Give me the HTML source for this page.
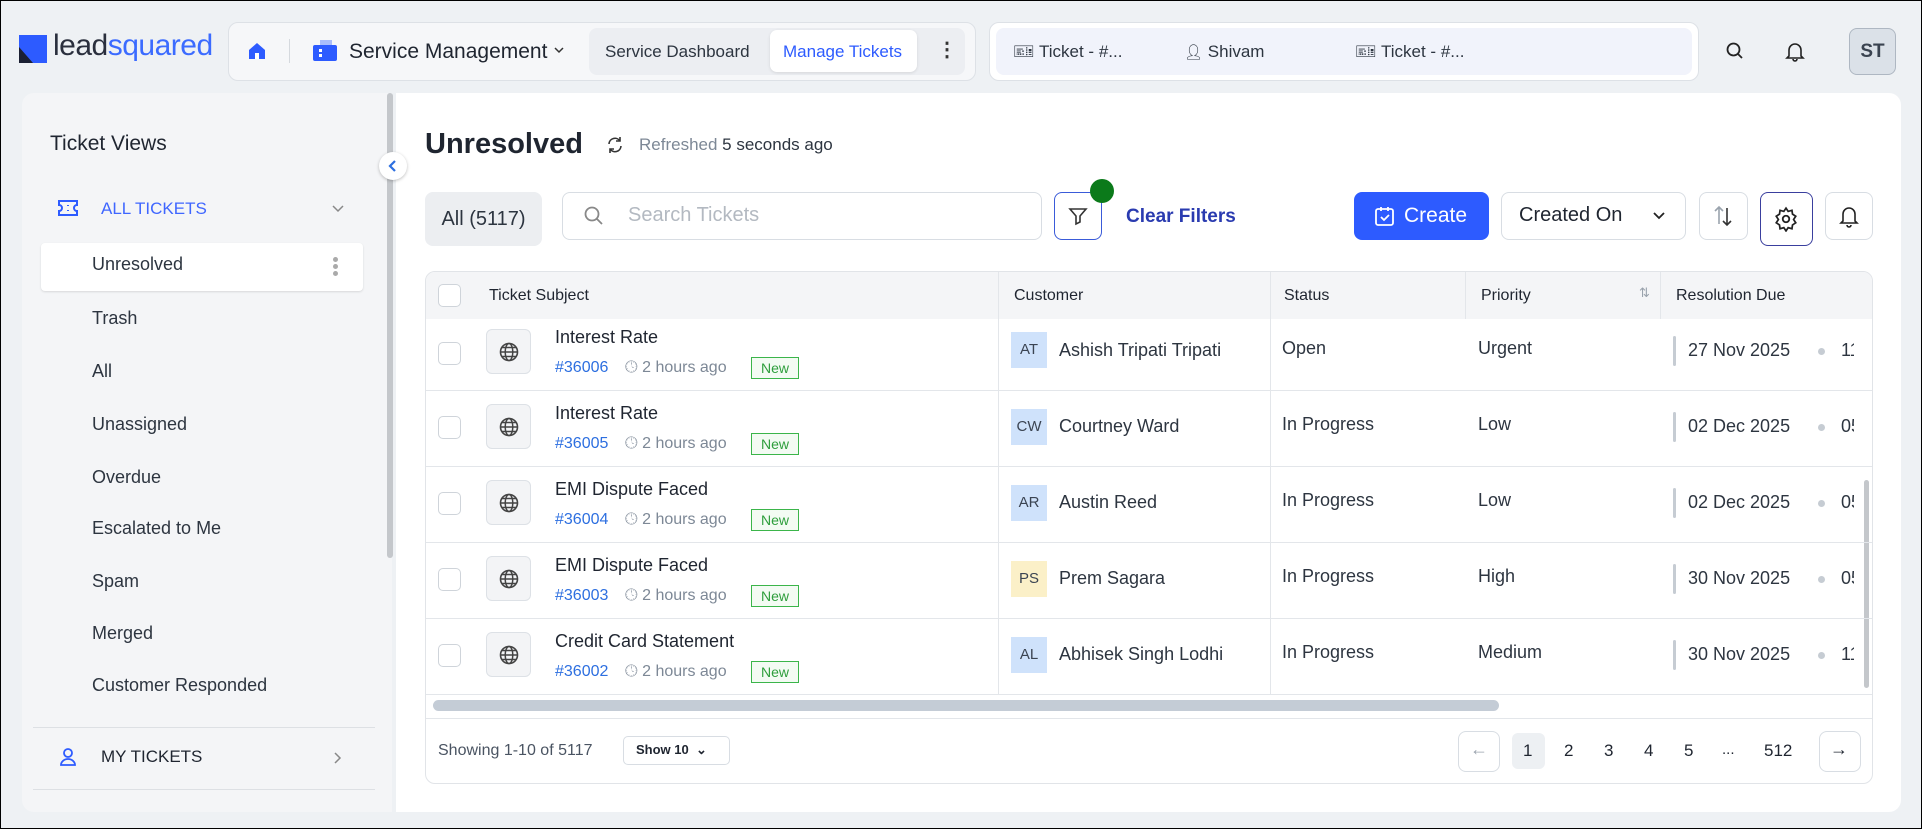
<!DOCTYPE html>
<html><head><meta charset="utf-8"><style>
*{box-sizing:border-box;margin:0;padding:0}
body{width:1922px;height:829px;overflow:hidden;background:#eef1f4;font-family:"Liberation Sans",sans-serif;color:#1f2937;position:relative;border:1px solid #000}
.a{position:absolute}
.t{position:absolute;white-space:nowrap}
.row{position:absolute;left:0;width:1448px;height:76px;border-bottom:1px solid #e3e6ea}
.cb{position:absolute;width:23px;height:23px;border:1.5px solid #cfd4da;border-radius:5px;background:#fff}
.btn{position:absolute;border:1px solid #d8dde3;border-radius:8px;background:#fff}
.si{font-size:18px;color:#2d3540;left:91px}
.g{position:absolute;width:45px;height:45px;background:#f3f4f6;border:1px solid #dde1e6;border-radius:6px}
.gl{position:absolute}
.nw{position:absolute;width:48px;height:22px;border:1px solid #3bb54a;color:#2e9e3c;font-size:14px;text-align:center;line-height:20px;background:#f3fbf3}
.av{position:absolute;width:36px;height:36px;font-size:15px;color:#3b4452;text-align:center;line-height:36px}
.bar{position:absolute;width:3px;height:30px;background:#c6ccd3;border-radius:2px}
.dt{position:absolute;width:7px;height:7px;border-radius:50%;background:#c6ccd3}
.sub{font-size:18px;color:#1f2530}
.id{font-size:16px;color:#2d6fe0}
.tm{font-size:16px;color:#7d8896}
.cell{font-size:18px;color:#2d3540}
</style></head><body>
<svg width="0" height="0" style="position:absolute"><defs><symbol id="globe" viewBox="0 0 22 22"><circle cx="11" cy="11" r="8.5" stroke="#444" stroke-width="1.6" fill="none"/><ellipse cx="11" cy="11" rx="3.8" ry="8.5" stroke="#444" stroke-width="1.5" fill="none"/><path d="M2.5 11h17M4 6.5h14M4 15.5h14" stroke="#444" stroke-width="1.4"/></symbol></defs></svg>
<!-- logo -->
<div class="a" style="left:18px;top:34px;width:28px;height:28px;background:#2d5bff"></div>
<div class="a" style="left:18px;top:46px;width:14px;height:16px;background:#1b2033;clip-path:polygon(0 0,100% 100%,0 100%)"></div>
<div class="t" style="left:52px;top:28px;font-size:30px;letter-spacing:-0.5px;color:#2a2f3d">lead<span style="color:#3b6bff">squared</span></div>
<!-- nav box -->
<div class="a" style="left:227px;top:21px;width:748px;height:59px;background:#f6f7f9;border:1px solid #dde1e6;border-radius:10px"></div>
<svg class="a" style="left:246px;top:40px" width="20" height="20" viewBox="0 0 20 20"><path d="M2 9L10 2l8 7v9H2z" fill="#2d5bff"/><rect x="8" y="12" width="4" height="6" fill="#fff"/></svg>
<div class="a" style="left:288px;top:38px;width:1px;height:24px;background:#d5d9de"></div>
<svg class="a" style="left:310px;top:36px" width="28" height="28" viewBox="0 0 28 28"><path d="M9 3l12 0 0 5-12 0z" fill="#a9bdfc"/><rect x="2" y="8" width="24" height="16" rx="2" fill="#2d5bff"/><rect x="8" y="12" width="3" height="3" fill="#fff"/><rect x="8" y="17" width="3" height="3" fill="#fff"/></svg>
<div class="t" style="left:348px;top:39px;font-size:21px;color:#1f2530">Service Management</div>
<svg class="a" style="left:552px;top:44px" width="12" height="10"><path d="M2 3l4 4 4-4" stroke="#333" stroke-width="1.5" fill="none"/></svg>
<div class="a" style="left:588px;top:27px;width:376px;height:47px;background:#eceef2;border-radius:8px"></div>
<div class="t" style="left:604px;top:41px;font-size:17px;color:#2d3540">Service Dashboard</div>
<div class="a" style="left:769px;top:29px;width:147px;height:42px;background:#fff;border-radius:7px;box-shadow:0 1px 3px rgba(0,0,0,.1)"></div>
<div class="t" style="left:782px;top:41px;font-size:17px;color:#2d5bff">Manage Tickets</div>
<div class="t" style="left:936px;top:36px;font-size:20px;color:#333;font-weight:bold">⋮</div>
<!-- tabs box -->
<div class="a" style="left:988px;top:21px;width:710px;height:59px;background:#fff;border:1px solid #dde1e6;border-radius:10px"></div>
<div class="a" style="left:995px;top:27px;width:696px;height:47px;background:#f1f3fb;border-radius:8px"></div>
<div class="t" style="left:1012px;top:41px;font-size:17px;color:#2d3540">🎫︎ Ticket - #...</div>
<div class="t" style="left:1183px;top:41px;font-size:17px;color:#2d3540"><span style="font-size:15px">👤︎</span> Shivam</div>
<div class="t" style="left:1354px;top:41px;font-size:17px;color:#2d3540">🎫︎ Ticket - #...</div>
<svg class="a" style="left:1724px;top:40px" width="20" height="20" viewBox="0 0 20 20"><circle cx="8.5" cy="8.5" r="6" stroke="#222" stroke-width="1.8" fill="none"/><path d="M13 13l4 4" stroke="#222" stroke-width="1.8"/></svg>
<svg class="a" style="left:1783px;top:39px" width="22" height="22" viewBox="0 0 22 22"><path d="M5 16V10a6 6 0 0112 0v6l2 2H3z M9 19a2 2 0 004 0" stroke="#222" stroke-width="1.6" fill="none"/></svg>
<div class="a" style="left:1848px;top:27px;width:47px;height:47px;background:#dbe1e8;border:1px solid #aeb7c2;border-radius:8px;font-size:19px;font-weight:bold;color:#3a4350;text-align:center;line-height:45px">ST</div>
<!-- sidebar -->
<div class="a" style="left:21px;top:92px;width:370px;height:719px;background:#f4f5f7;border-radius:12px 0 0 12px"></div>
<div class="a" style="left:386px;top:92px;width:6px;height:465px;background:#c4c7cb;border-radius:3px"></div>
<div class="t" style="left:49px;top:131px;font-size:21px;color:#1f2530">Ticket Views</div>
<svg class="a" style="left:56px;top:198px" width="22" height="18" viewBox="0 0 22 18"><path d="M2 2h18v4a3 3 0 000 6v4H2v-4a3 3 0 000-6z" stroke="#2d5bff" stroke-width="2" fill="none"/><path d="M11 6v1M11 11v1" stroke="#2d5bff" stroke-width="2"/></svg>
<div class="t" style="left:100px;top:198px;font-size:17px;color:#3f66ff">ALL TICKETS</div>
<svg class="a" style="left:330px;top:203px" width="14" height="10"><path d="M2 2l5 5 5-5" stroke="#888" stroke-width="1.5" fill="none"/></svg>
<div class="a" style="left:40px;top:242px;width:322px;height:48px;background:#fff;border-radius:4px;box-shadow:0 1px 2px rgba(0,0,0,.12)"></div>
<div class="t si" style="top:253px">Unresolved</div>
<div class="a" style="left:332px;top:256px;width:5px;height:5px;border-radius:50%;background:#aaa;box-shadow:0 7px 0 #aaa,0 14px 0 #aaa"></div>
<div class="t si" style="top:307px">Trash</div>
<div class="t si" style="top:360px">All</div>
<div class="t si" style="top:413px">Unassigned</div>
<div class="t si" style="top:466px">Overdue</div>
<div class="t si" style="top:517px">Escalated to Me</div>
<div class="t si" style="top:570px">Spam</div>
<div class="t si" style="top:622px">Merged</div>
<div class="t si" style="top:674px">Customer Responded</div>
<div class="a" style="left:32px;top:726px;width:342px;height:1px;background:#dde0e4"></div>
<svg class="a" style="left:58px;top:746px" width="18" height="20" viewBox="0 0 18 20"><circle cx="9" cy="6" r="4" stroke="#2d5bff" stroke-width="1.8" fill="none"/><path d="M2 18a7 6 0 0114 0z" stroke="#2d5bff" stroke-width="1.8" fill="none"/></svg>
<div class="t" style="left:100px;top:746px;font-size:17px;color:#1f2530">MY TICKETS</div>
<svg class="a" style="left:332px;top:750px" width="10" height="14"><path d="M2 2l5 5-5 5" stroke="#888" stroke-width="1.5" fill="none"/></svg>
<div class="a" style="left:32px;top:788px;width:342px;height:1px;background:#dde0e4"></div>
<!-- main -->
<div class="a" style="left:395px;top:92px;width:1505px;height:719px;background:#fff;border-radius:0 12px 12px 0"></div>
<div class="a" style="left:378px;top:151px;width:28px;height:28px;border-radius:50%;background:#fff;box-shadow:0 1px 3px rgba(0,0,0,.25)"></div>
<svg class="a" style="left:386px;top:158px" width="12" height="14"><path d="M8 2L3 7l5 5" stroke="#2d6fe0" stroke-width="2.2" fill="none"/></svg>
<div class="t" style="left:424px;top:127px;font-size:29px;font-weight:bold;color:#1f2530">Unresolved</div>
<svg class="a" style="left:604px;top:134px" width="20" height="20" viewBox="0 0 20 20"><path d="M4 9a6 6 0 0111-3M16 11a6 6 0 01-11 3" stroke="#333" stroke-width="1.6" fill="none"/><path d="M15 2v4h-4M5 18v-4h4" stroke="#333" stroke-width="1.6" fill="none"/></svg>
<div class="t" style="left:638px;top:134px;font-size:17px;color:#7d8896">Refreshed <span style="color:#2d3540">5 seconds ago</span></div>
<!-- toolbar -->
<div class="a" style="left:424px;top:191px;width:117px;height:54px;background:#eceef1;border-radius:8px;font-size:20px;color:#2d3540;line-height:54px;text-align:center">All (5117)</div>
<div class="btn" style="left:561px;top:191px;width:480px;height:48px"></div>
<svg class="a" style="left:582px;top:204px" width="22" height="22" viewBox="0 0 22 22"><circle cx="9" cy="9" r="6.5" stroke="#888" stroke-width="1.8" fill="none"/><path d="M14 14l5 5" stroke="#888" stroke-width="1.8"/></svg>
<div class="t" style="left:627px;top:203px;font-size:20px;color:#b3b9c1">Search Tickets</div>
<div class="btn" style="left:1053px;top:191px;width:48px;height:48px;border-color:#3a5bd9"></div>
<svg class="a" style="left:1066px;top:204px" width="22" height="22" viewBox="0 0 22 22"><path d="M3 4h16l-6 7v6l-4 2v-8z" stroke="#333" stroke-width="1.6" fill="none"/></svg>
<div class="a" style="left:1089px;top:178px;width:24px;height:24px;border-radius:50%;background:#0b7a1a"></div>
<div class="t" style="left:1125px;top:205px;font-size:19px;font-weight:bold;color:#2a3bb0">Clear Filters</div>
<div class="a" style="left:1353px;top:191px;width:135px;height:48px;background:#2d5bff;border-radius:8px"></div>
<svg class="a" style="left:1372px;top:203px" width="24" height="24" viewBox="0 0 24 24"><rect x="3" y="5" width="17" height="16" rx="2" stroke="#fff" stroke-width="1.8" fill="none"/><path d="M8 3v4M15 3v4M8 13l3 3 5-5" stroke="#fff" stroke-width="1.8" fill="none"/></svg>
<div class="t" style="left:1403px;top:203px;font-size:21px;color:#fff">Create</div>
<div class="btn" style="left:1500px;top:191px;width:185px;height:48px"></div>
<div class="t" style="left:1518px;top:203px;font-size:20px;color:#1f2530">Created On</div>
<svg class="a" style="left:1651px;top:210px" width="14" height="10"><path d="M2 2l5 5 5-5" stroke="#222" stroke-width="1.8" fill="none"/></svg>
<div class="btn" style="left:1698px;top:191px;width:49px;height:48px"></div>
<svg class="a" style="left:1710px;top:201px" width="24" height="28" viewBox="0 0 24 28"><path d="M8 22V5M4 9l4-4 4 4" stroke="#9aa3ad" stroke-width="1.6" fill="none"/><path d="M16 6v17M12 19l4 4 4-4" stroke="#333" stroke-width="1.6" fill="none"/></svg>
<div class="btn" style="left:1759px;top:191px;width:53px;height:54px;border-color:#3a3f9e"></div>
<svg class="a" style="left:1772px;top:205px" width="26" height="26" viewBox="0 0 24 24"><circle cx="12" cy="12" r="3" stroke="#222" stroke-width="1.7" fill="none"/><path d="M12 2l2 3 3.5-1 .5 3.5 3 2-2 3 2 3-3 2-.5 3.5-3.5-1-2 3-2-3-3.5 1-.5-3.5-3-2 2-3-2-3 3-2 .5-3.5 3.5 1z" stroke="#222" stroke-width="1.6" fill="none"/></svg>
<div class="btn" style="left:1824px;top:191px;width:48px;height:48px"></div>
<svg class="a" style="left:1837px;top:203px" width="22" height="24" viewBox="0 0 22 24"><path d="M5 17V10a6 6 0 0112 0v7l2 2H3z M9 21a2 2 0 004 0" stroke="#222" stroke-width="1.6" fill="none"/></svg>
<!-- table -->
<div class="a" style="left:424px;top:270px;width:1448px;height:513px;border:1px solid #e1e4e8;border-radius:10px;overflow:hidden">
 <div class="a" style="left:0;top:0;width:1448px;height:47px;background:#f4f5f7"></div>
 <div class="cb" style="left:12px;top:12px"></div>
 <div class="t" style="left:63px;top:15px;font-size:16px;color:#1f2530">Ticket Subject</div>
 <div class="t" style="left:588px;top:15px;font-size:16px;color:#1f2530">Customer</div>
 <div class="t" style="left:858px;top:15px;font-size:16px;color:#1f2530">Status</div>
 <div class="t" style="left:1055px;top:15px;font-size:16px;color:#1f2530">Priority</div>
 <div class="t" style="left:1213px;top:13px;font-size:13px;color:#9aa3ad">⇅</div>
 <div class="t" style="left:1250px;top:15px;font-size:16px;color:#1f2530">Resolution Due</div>
 <div class="a" style="left:572px;top:0;width:1px;height:423px;background:#e3e6ea"></div>
 <div class="a" style="left:844px;top:0;width:1px;height:423px;background:#e3e6ea"></div>
 <div class="a" style="left:1039px;top:0;width:1px;height:47px;background:#e3e6ea"></div>
 <div class="a" style="left:1234px;top:0;width:1px;height:47px;background:#e3e6ea"></div>
 <div class="a" style="left:1438px;top:208px;width:5px;height:208px;background:#c4c7cb;border-radius:3px"></div>
 <div class="a" style="left:7px;top:428px;width:1066px;height:11px;background:#c4ccd6;border-radius:6px"></div>
 <div class="a" style="left:0;top:446px;width:1448px;height:1px;background:#e3e6ea"></div>
 <div class="t" style="left:12px;top:470px;font-size:16px;color:#4a5462">Showing 1-10 of 5117</div>
 <div class="btn" style="left:197px;top:464px;width:107px;height:29px;border-radius:5px"></div>
 <div class="t" style="left:210px;top:470px;font-size:13px;font-weight:bold;color:#1f2530">Show 10 &nbsp;⌄</div>
 <div class="btn" style="left:1032px;top:459px;width:42px;height:41px"></div>
 <div class="t" style="left:1044px;top:467px;font-size:18px;color:#9aa3ad">←</div>
 <div class="a" style="left:1086px;top:461px;width:33px;height:36px;background:#edf0f3;border-radius:6px"></div>
 <div class="t" style="left:1097px;top:469px;font-size:17px;color:#1f2530">1</div>
 <div class="t" style="left:1138px;top:469px;font-size:17px;color:#1f2530">2</div>
 <div class="t" style="left:1178px;top:469px;font-size:17px;color:#1f2530">3</div>
 <div class="t" style="left:1218px;top:469px;font-size:17px;color:#1f2530">4</div>
 <div class="t" style="left:1258px;top:469px;font-size:17px;color:#1f2530">5</div>
 <div class="t" style="left:1296px;top:469px;font-size:15px;color:#1f2530">...</div>
 <div class="t" style="left:1338px;top:469px;font-size:17px;color:#1f2530">512</div>
 <div class="btn" style="left:1393px;top:459px;width:42px;height:41px"></div>
 <div class="t" style="left:1404px;top:467px;font-size:18px;color:#1f2530">→</div>
 <div class="row" style="top:47px;height:72px"></div>
 <div class="row" style="top:119px"></div>
 <div class="row" style="top:195px"></div>
 <div class="row" style="top:271px"></div>
 <div class="row" style="top:347px"></div>
</div>
<!-- row1 -->
<div class="cb" style="left:437px;top:341px"></div><div class="g" style="left:485px;top:328px"></div><svg class="gl" style="left:497px;top:340px" width="22" height="22"><use href="#globe"/></svg>
<div class="t sub" style="left:554px;top:326px">Interest Rate</div>
<div class="t id" style="left:554px;top:358px">#36006</div><div class="t tm" style="left:624px;top:358px">🕓︎ 2 hours ago</div><div class="nw" style="left:750px;top:356px">New</div>
<div class="av" style="left:1010px;top:331px;background:#cfe2fb">AT</div><div class="t cell" style="left:1058px;top:339px">Ashish Tripati Tripati</div>
<div class="t cell" style="left:1281px;top:337px">Open</div><div class="t cell" style="left:1477px;top:337px">Urgent</div>
<div class="bar" style="left:1672px;top:335px"></div><div class="t cell" style="left:1687px;top:339px">27 Nov 2025</div><div class="dt" style="left:1817px;top:347px"></div><div class="t cell" style="left:1840px;top:339px;width:13px;overflow:hidden">11</div>
<!-- row2 -->
<div class="cb" style="left:437px;top:415px"></div><div class="g" style="left:485px;top:403px"></div><svg class="gl" style="left:497px;top:415px" width="22" height="22"><use href="#globe"/></svg>
<div class="t sub" style="left:554px;top:402px">Interest Rate</div>
<div class="t id" style="left:554px;top:434px">#36005</div><div class="t tm" style="left:624px;top:434px">🕓︎ 2 hours ago</div><div class="nw" style="left:750px;top:432px">New</div>
<div class="av" style="left:1010px;top:408px;background:#cfe2fb">CW</div><div class="t cell" style="left:1058px;top:415px">Courtney Ward</div>
<div class="t cell" style="left:1281px;top:413px">In Progress</div><div class="t cell" style="left:1477px;top:413px">Low</div>
<div class="bar" style="left:1672px;top:411px"></div><div class="t cell" style="left:1687px;top:415px">02 Dec 2025</div><div class="dt" style="left:1817px;top:423px"></div><div class="t cell" style="left:1840px;top:415px;width:13px;overflow:hidden">05</div>
<!-- row3 -->
<div class="cb" style="left:437px;top:491px"></div><div class="g" style="left:485px;top:479px"></div><svg class="gl" style="left:497px;top:491px" width="22" height="22"><use href="#globe"/></svg>
<div class="t sub" style="left:554px;top:478px">EMI Dispute Faced</div>
<div class="t id" style="left:554px;top:510px">#36004</div><div class="t tm" style="left:624px;top:510px">🕓︎ 2 hours ago</div><div class="nw" style="left:750px;top:508px">New</div>
<div class="av" style="left:1010px;top:484px;background:#cfe2fb">AR</div><div class="t cell" style="left:1058px;top:491px">Austin Reed</div>
<div class="t cell" style="left:1281px;top:489px">In Progress</div><div class="t cell" style="left:1477px;top:489px">Low</div>
<div class="bar" style="left:1672px;top:487px"></div><div class="t cell" style="left:1687px;top:491px">02 Dec 2025</div><div class="dt" style="left:1817px;top:499px"></div><div class="t cell" style="left:1840px;top:491px;width:13px;overflow:hidden">05</div>
<!-- row4 -->
<div class="cb" style="left:437px;top:567px"></div><div class="g" style="left:485px;top:555px"></div><svg class="gl" style="left:497px;top:567px" width="22" height="22"><use href="#globe"/></svg>
<div class="t sub" style="left:554px;top:554px">EMI Dispute Faced</div>
<div class="t id" style="left:554px;top:586px">#36003</div><div class="t tm" style="left:624px;top:586px">🕓︎ 2 hours ago</div><div class="nw" style="left:750px;top:584px">New</div>
<div class="av" style="left:1010px;top:560px;background:#fbf0c8">PS</div><div class="t cell" style="left:1058px;top:567px">Prem Sagara</div>
<div class="t cell" style="left:1281px;top:565px">In Progress</div><div class="t cell" style="left:1477px;top:565px">High</div>
<div class="bar" style="left:1672px;top:563px"></div><div class="t cell" style="left:1687px;top:567px">30 Nov 2025</div><div class="dt" style="left:1817px;top:575px"></div><div class="t cell" style="left:1840px;top:567px;width:13px;overflow:hidden">05</div>
<!-- row5 -->
<div class="cb" style="left:437px;top:643px"></div><div class="g" style="left:485px;top:631px"></div><svg class="gl" style="left:497px;top:643px" width="22" height="22"><use href="#globe"/></svg>
<div class="t sub" style="left:554px;top:630px">Credit Card Statement</div>
<div class="t id" style="left:554px;top:662px">#36002</div><div class="t tm" style="left:624px;top:662px">🕓︎ 2 hours ago</div><div class="nw" style="left:750px;top:660px">New</div>
<div class="av" style="left:1010px;top:636px;background:#cfe2fb">AL</div><div class="t cell" style="left:1058px;top:643px">Abhisek Singh Lodhi</div>
<div class="t cell" style="left:1281px;top:641px">In Progress</div><div class="t cell" style="left:1477px;top:641px">Medium</div>
<div class="bar" style="left:1672px;top:639px"></div><div class="t cell" style="left:1687px;top:643px">30 Nov 2025</div><div class="dt" style="left:1817px;top:651px"></div><div class="t cell" style="left:1840px;top:643px;width:13px;overflow:hidden">11</div>
</body></html>
